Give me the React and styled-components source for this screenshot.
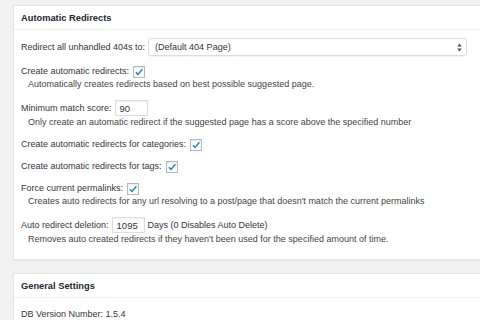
import React from 'react';
import styled, { createGlobalStyle } from 'styled-components';

const GlobalStyle = createGlobalStyle`
    html, body {
        margin: 0;
        padding: 0;
        background: #f1f1f1;
        overflow: hidden;
    }
    body {
        font-family: 'Liberation Sans', Arial, sans-serif;
        font-size: 9px;
        color: #32373c;
    }
`;

const Page = styled.div`
    padding: 5px 0 0 13px;
    width: 520px;
`;

const Panel = styled.div`
    background: #fff;
    border: 1px solid #e5e5e5;
    box-shadow: 0 1px 1px rgba(0, 0, 0, 0.04);
    margin-bottom: 13px;
`;

const PanelHeader = styled.h2`
    margin: 0;
    height: 23px;
    padding: 0 7px;
    display: flex;
    align-items: center;
    font-size: 9.3px;
    font-weight: bold;
    color: #23282d;
    border-bottom: 1px solid #eee;
`;

const PanelBody = styled.div`
    padding: 8px 7px 13px;
    display: flex;
    flex-direction: column;
    gap: 9px;
`;

const Field = styled.div`
    display: flex;
    flex-direction: column;
`;

const Row = styled.div`
    display: flex;
    align-items: center;
    gap: 3px;
    min-height: ${(p) => p.$h || 13}px;
    line-height: 13px;
`;

const Desc = styled.div`
    padding-left: 7px;
    line-height: 13px;
    color: #444;
`;

const SelectBox = styled.div`
    width: 307px;
    height: 16px;
    border: 1px solid #ddd;
    border-radius: 3px;
    box-shadow: 0 1px 1px rgba(0, 0, 0, 0.05);
    display: flex;
    align-items: center;
    justify-content: space-between;
    padding: 0 4px 0 6px;
    color: #32373c;
`;

const TextInput = styled.div`
    width: ${(p) => p.$w}px;
    height: 14px;
    border: 1px solid #ddd;
    box-shadow: inset 0 1px 2px rgba(0, 0, 0, 0.07);
    display: flex;
    align-items: center;
    padding: 0 4px;
    font-size: 9.5px;
`;

const CheckBox = styled.span`
    width: 10px;
    height: 10px;
    border: 1px solid #b4b9be;
    background: #fff;
    box-shadow: inset 0 1px 2px rgba(0, 0, 0, 0.1);
    display: inline-flex;
    align-items: center;
    justify-content: center;
    margin-left: 1px;
`;

const Check = () => (
    <CheckBox>
        <svg width="10" height="10" viewBox="0 0 10 10">
            <path d="M1.8 5.2 L4 7.4 L8.4 2.2" fill="none" stroke="#1e8cbe" strokeWidth="1.5" />
        </svg>
    </CheckBox>
);

const Arrows = () => (
    <svg width="5" height="9" viewBox="0 0 5 9">
        <path d="M2.5 0.5 L4.8 3.6 H0.2 Z M2.5 8.5 L4.8 5.4 H0.2 Z" fill="#555" />
    </svg>
);

const App = () => (
    <Page>
        <GlobalStyle />
        <Panel>
            <PanelHeader>Automatic Redirects</PanelHeader>
            <PanelBody>
                <Field>
                    <Row $h={18}>
                        <span>Redirect all unhandled 404s to:</span>
                        <SelectBox>
                            <span>(Default 404 Page)</span>
                            <Arrows />
                        </SelectBox>
                    </Row>
                </Field>
                <Field>
                    <Row>
                        <span>Create automatic redirects:</span>
                        <Check />
                    </Row>
                    <Desc>Automatically creates redirects based on best possible suggested page.</Desc>
                </Field>
                <Field>
                    <Row $h={16}>
                        <span>Minimum match score:</span>
                        <TextInput $w={23}>90</TextInput>
                    </Row>
                    <Desc>Only create an automatic redirect if the suggested page has a score above the specified number</Desc>
                </Field>
                <Field>
                    <Row>
                        <span>Create automatic redirects for categories:</span>
                        <Check />
                    </Row>
                </Field>
                <Field>
                    <Row>
                        <span>Create automatic redirects for tags:</span>
                        <Check />
                    </Row>
                </Field>
                <Field>
                    <Row>
                        <span>Force current permalinks:</span>
                        <Check />
                    </Row>
                    <Desc>Creates auto redirects for any url resolving to a post/page that doesn't match the current permalinks</Desc>
                </Field>
                <Field>
                    <Row $h={16}>
                        <span>Auto redirect deletion:</span>
                        <TextInput $w={23}>1095</TextInput>
                        <span>Days (0 Disables Auto Delete)</span>
                    </Row>
                    <Desc>Removes auto created redirects if they haven't been used for the specified amount of time.</Desc>
                </Field>
            </PanelBody>
        </Panel>
        <Panel>
            <PanelHeader>General Settings</PanelHeader>
            <PanelBody>
                <Field>
                    <Row $h={16}>
                        <span>DB Version Number: 1.5.4</span>
                    </Row>
                </Field>
            </PanelBody>
        </Panel>
    </Page>
);

export default App;
